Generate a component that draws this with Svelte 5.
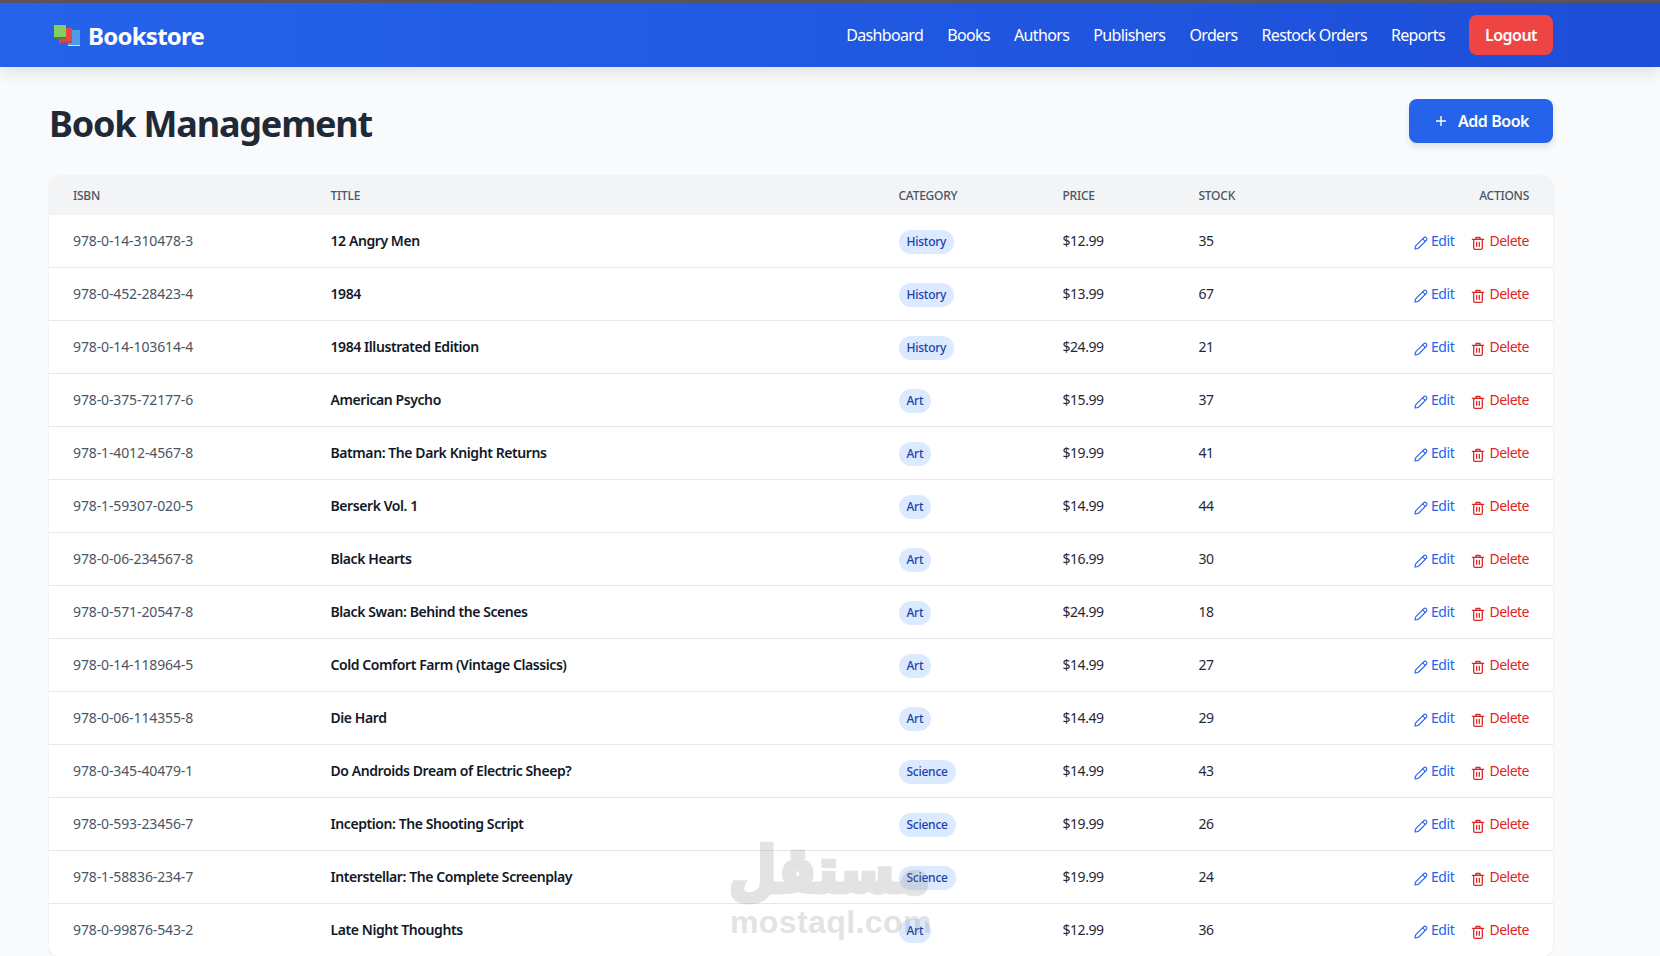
<script>
  const navLinks = ['Dashboard', 'Books', 'Authors', 'Publishers', 'Orders', 'Restock Orders', 'Reports'];
  const books = [
    ['978-0-14-310478-3', '12 Angry Men', 'History', '$12.99', 35],
    ['978-0-452-28423-4', '1984', 'History', '$13.99', 67],
    ['978-0-14-103614-4', '1984 Illustrated Edition', 'History', '$24.99', 21],
    ['978-0-375-72177-6', 'American Psycho', 'Art', '$15.99', 37],
    ['978-1-4012-4567-8', 'Batman: The Dark Knight Returns', 'Art', '$19.99', 41],
    ['978-1-59307-020-5', 'Berserk Vol. 1', 'Art', '$14.99', 44],
    ['978-0-06-234567-8', 'Black Hearts', 'Art', '$16.99', 30],
    ['978-0-571-20547-8', 'Black Swan: Behind the Scenes', 'Art', '$24.99', 18],
    ['978-0-14-118964-5', 'Cold Comfort Farm (Vintage Classics)', 'Art', '$14.99', 27],
    ['978-0-06-114355-8', 'Die Hard', 'Art', '$14.49', 29],
    ['978-0-345-40479-1', 'Do Androids Dream of Electric Sheep?', 'Science', '$14.99', 43],
    ['978-0-593-23456-7', 'Inception: The Shooting Script', 'Science', '$19.99', 26],
    ['978-1-58836-234-7', 'Interstellar: The Complete Screenplay', 'Science', '$19.99', 24],
    ['978-0-99876-543-2', 'Late Night Thoughts', 'Art', '$12.99', 36]
  ];
</script>

<div class="page">
  <div class="topline"></div>
  <nav class="nav">
    <div class="brand">
      <svg class="logo" viewBox="0 0 26 24" width="26" height="24" aria-hidden="true">
        <rect x="14" y="7" width="12" height="16" fill="#4f9be8" />
        <rect x="14" y="22" width="12" height="1" fill="#cfe4fa" />
        <rect x="5" y="5" width="13" height="15" fill="#e94545" />
        <rect x="7" y="18" width="11" height="2" fill="#b04860" />
        <rect x="0" y="2" width="12" height="14" fill="#86cd66" />
        <rect x="0" y="14" width="12" height="2" fill="#4f7a48" />
      </svg>
      <span>Bookstore</span>
    </div>
    <div class="links">
      {#each navLinks as link}
        <a href="#top" class="link">{link}</a>
      {/each}
      <button class="logout">Logout</button>
    </div>
  </nav>

  <main class="main">
    <header class="head">
      <h1>Book Management</h1>
      <button class="add">
        <svg viewBox="0 0 16 16" width="16" height="16" fill="none" stroke="currentColor" stroke-width="1.4" aria-hidden="true"><path d="M3 8h10M8 3v10" /></svg>
        Add Book
      </button>
    </header>

    <div class="card">
      <table>
        <colgroup>
          <col class="c1" /><col class="c2" /><col class="c3" /><col class="c4" /><col class="c5" /><col />
        </colgroup>
        <thead>
          <tr>
            <th>ISBN</th><th>Title</th><th>Category</th><th>Price</th><th>Stock</th><th class="right">Actions</th>
          </tr>
        </thead>
        <tbody>
          {#each books as b}
            <tr>
              <td class="isbn">{b[0]}</td>
              <td class="title">{b[1]}</td>
              <td><span class="badge">{b[2]}</span></td>
              <td class="num">{b[3]}</td>
              <td class="num">{b[4]}</td>
              <td class="right">
                <span class="acts">
                  <a href="#top" class="edit">
                    <svg viewBox="0 0 24 24" width="16" height="16" fill="none" stroke="currentColor" stroke-width="1.7" stroke-linecap="round" stroke-linejoin="round" aria-hidden="true"><path d="M3 21c0-2 .6-4 1.6-5.4L16.4 3.8a2.9 2.9 0 0 1 4 4L8.6 19.5C7 20.5 5 21 3 21z" /><path d="M14.5 5.7l3.9 3.9" /></svg>
                    Edit
                  </a>
                  <a href="#top" class="del">
                    <svg viewBox="0 0 24 24" width="16" height="16" fill="none" stroke="currentColor" stroke-width="1.9" stroke-linecap="round" stroke-linejoin="round" aria-hidden="true"><path d="M3.5 6.5h17" /><path d="M9 6V3.5h6V6" /><rect x="5.5" y="6.5" width="13" height="15" rx="2" /><path d="M10 11v6M14 11v6" /></svg>
                    Delete
                  </a>
                </span>
              </td>
            </tr>
          {/each}
        </tbody>
      </table>
    </div>
  </main>

  <div class="mark">
    <div class="mark-ar" lang="ar" dir="rtl">مستقل</div>
    <div class="mark-en">mostaql.com</div>
  </div>
</div>

<style>
  :global(body) {
    margin: 0;
    background: #f9fafb;
  }
  .page {
    position: relative;
    height: 956px;
    overflow: hidden;
    background: #f9fafb;
    font-family: "Noto Sans", "Open Sans", sans-serif;
    color: #1f2937;
  }
  .topline {
    height: 3px;
    background: #5d5460;
  }
  .nav {
    height: 64px;
    box-sizing: border-box;
    padding: 0 107px 0 54px;
    display: flex;
    align-items: center;
    justify-content: space-between;
    background: linear-gradient(90deg, #2563eb, #1d4ed8);
    box-shadow: 0 4px 16px rgba(0, 0, 0, 0.12);
    position: relative;
  }
  .brand {
    display: flex;
    align-items: center;
    gap: 8px;
    color: #fff;
    font-size: 24px;
    font-weight: 700;
    letter-spacing: -0.75px;
  }
  .links {
    display: flex;
    align-items: center;
    gap: 24px;
  }
  .link {
    color: #fff;
    text-decoration: none;
    font-size: 16px;
    letter-spacing: -0.64px;
  }
  .logout {
    height: 40px;
    width: 84px;
    border: 0;
    border-radius: 8px;
    background: #ef4444;
    color: #fff;
    font: 600 16px "Noto Sans", sans-serif;
    letter-spacing: -0.5px;
  }
  .main {
    padding: 32px 107px 0 49px;
  }
  .head {
    display: flex;
    align-items: center;
    justify-content: space-between;
    height: 44px;
    margin-bottom: 32px;
  }
  h1 {
    margin: 4px 0 0;
    font-size: 36px;
    font-weight: 700;
    letter-spacing: -1.2px;
    color: #1f2937;
  }
  .add {
    width: 144px;
    height: 44px;
    box-sizing: border-box;
    padding: 0 0 0 24px;
    border: 0;
    border-radius: 8px;
    background: #2563eb;
    color: #fff;
    font: 600 16px "Noto Sans", sans-serif;
    letter-spacing: -0.45px;
    box-shadow: 0 4px 6px rgba(0, 0, 0, 0.1);
    display: flex;
    align-items: center;
    gap: 9px;
  }
  .card {
    background: #fff;
    border-radius: 12px;
    overflow: hidden;
    box-shadow: 0 1px 3px rgba(0, 0, 0, 0.08);
  }
  table {
    width: 100%;
    border-collapse: separate;
    border-spacing: 0;
    table-layout: fixed;
  }
  .c1 { width: 257.5px; }
  .c2 { width: 568px; }
  .c3 { width: 164px; }
  .c4 { width: 136px; }
  .c5 { width: 140px; }
  thead tr {
    height: 40px;
    background: #f3f4f6;
  }
  th {
    padding: 0 24px;
    text-align: left;
    font-size: 12px;
    font-weight: 500;
    text-transform: uppercase;
    letter-spacing: -0.25px;
    color: #4b5563;
  }
  td {
    height: 53px;
    box-sizing: border-box;
    padding: 0 24px 1px;
    font-size: 14px;
    letter-spacing: -0.3px;
    white-space: nowrap;
    border-bottom: 1px solid #e5e7eb;
  }
  .isbn { color: #4b5563; letter-spacing: -0.12px; }
  .title { font-weight: 600; color: #111827; letter-spacing: -0.42px; }
  .num { color: #1f2937; letter-spacing: -0.45px; }
  .right { text-align: right; }
  .badge {
    display: inline-block;
    vertical-align: middle;
    margin-top: 3px;
    padding: 0 8px;
    line-height: 24px;
    border-radius: 12px;
    background: #dbeafe;
    color: #1e40af;
    font-size: 12px;
    font-weight: 500;
    letter-spacing: -0.25px;
  }
  .acts {
    display: inline-flex;
    align-items: center;
    vertical-align: middle;
    margin-bottom: 1px;
    gap: 16px;
    letter-spacing: -0.4px;
  }
  .edit, .del {
    display: inline-flex;
    align-items: center;
    gap: 2px;
    text-decoration: none;
  }
  .edit svg, .del svg {
    margin: 2px 0 -2px;
  }
  .edit { color: #2563eb; }
  .del { color: #dc2626; gap: 3px; letter-spacing: -0.5px; }
  .mark {
    position: absolute;
    left: 730px;
    top: 834px;
    width: 200px;
    color: rgb(130, 130, 130);
    opacity: 0.22;
    text-align: center;
    pointer-events: none;
  }
  .mark-ar {
    font: 700 55px/72px "DejaVu Sans", sans-serif;
    white-space: nowrap;
    transform: scaleY(1.15);
    -webkit-text-stroke: 4px rgb(130, 130, 130);
  }
  .mark-en {
    font: 700 32px/32px "Liberation Sans", sans-serif;
    letter-spacing: 0.4px;
    white-space: nowrap;
  }
</style>
